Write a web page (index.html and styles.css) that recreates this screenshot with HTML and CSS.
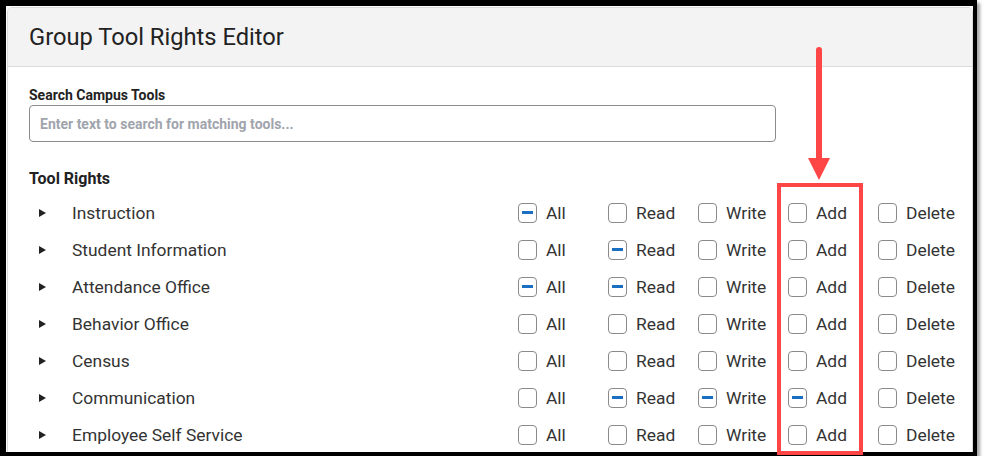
FILE: index.html
```html
<!DOCTYPE html>
<html lang="en">
<head>
    <meta charset="UTF-8">
    <meta name="viewport" content="width=device-width, initial-scale=1.0">
    <title>Group Tool Rights Editor</title>
    <link rel="stylesheet" href="styles.css">
</head>
<body>
    <div class="frame">
        <div class="panel">
            <div class="header">
                <h1>Group Tool Rights Editor</h1>
            </div>
            <div class="content">
                <label class="field-label" for="search">Search Campus Tools</label>
                <input id="search" class="search" type="text" placeholder="Enter text to search for matching tools...">

                <h2 class="section-title">Tool Rights</h2>
                <div class="rights">
                    <div class="row">
                        <span class="caret"></span><span class="name">Instruction</span>
                        <span class="opt"><span class="box partial"></span>All</span>
                        <span class="opt"><span class="box"></span>Read</span>
                        <span class="opt"><span class="box"></span>Write</span>
                        <span class="opt"><span class="box"></span>Add</span>
                        <span class="opt"><span class="box"></span>Delete</span>
                    </div>
                    <div class="row">
                        <span class="caret"></span><span class="name">Student Information</span>
                        <span class="opt"><span class="box"></span>All</span>
                        <span class="opt"><span class="box partial"></span>Read</span>
                        <span class="opt"><span class="box"></span>Write</span>
                        <span class="opt"><span class="box"></span>Add</span>
                        <span class="opt"><span class="box"></span>Delete</span>
                    </div>
                    <div class="row">
                        <span class="caret"></span><span class="name">Attendance Office</span>
                        <span class="opt"><span class="box partial"></span>All</span>
                        <span class="opt"><span class="box partial"></span>Read</span>
                        <span class="opt"><span class="box"></span>Write</span>
                        <span class="opt"><span class="box"></span>Add</span>
                        <span class="opt"><span class="box"></span>Delete</span>
                    </div>
                    <div class="row">
                        <span class="caret"></span><span class="name">Behavior Office</span>
                        <span class="opt"><span class="box"></span>All</span>
                        <span class="opt"><span class="box"></span>Read</span>
                        <span class="opt"><span class="box"></span>Write</span>
                        <span class="opt"><span class="box"></span>Add</span>
                        <span class="opt"><span class="box"></span>Delete</span>
                    </div>
                    <div class="row">
                        <span class="caret"></span><span class="name">Census</span>
                        <span class="opt"><span class="box"></span>All</span>
                        <span class="opt"><span class="box"></span>Read</span>
                        <span class="opt"><span class="box"></span>Write</span>
                        <span class="opt"><span class="box"></span>Add</span>
                        <span class="opt"><span class="box"></span>Delete</span>
                    </div>
                    <div class="row">
                        <span class="caret"></span><span class="name">Communication</span>
                        <span class="opt"><span class="box"></span>All</span>
                        <span class="opt"><span class="box partial"></span>Read</span>
                        <span class="opt"><span class="box partial"></span>Write</span>
                        <span class="opt"><span class="box partial"></span>Add</span>
                        <span class="opt"><span class="box"></span>Delete</span>
                    </div>
                    <div class="row">
                        <span class="caret"></span><span class="name">Employee Self Service</span>
                        <span class="opt"><span class="box"></span>All</span>
                        <span class="opt"><span class="box"></span>Read</span>
                        <span class="opt"><span class="box"></span>Write</span>
                        <span class="opt"><span class="box"></span>Add</span>
                        <span class="opt"><span class="box"></span>Delete</span>
                    </div>
                </div>
            </div>
        </div>
    </div>

    <!-- annotation overlay -->
    <div class="highlight"></div>
    <svg class="arrow" width="40" height="140" viewBox="0 0 40 140">
        <line x1="20" y1="4" x2="20" y2="116" stroke="#ff4646" stroke-width="6" stroke-linecap="round"/>
        <polygon points="9,112 31,112 20,134" fill="#ff4646"/>
    </svg>
</body>
</html>
```

FILE: styles.css
```css
body {
    margin: 0;
    padding: 0;
    background-color: #ffffff;
    font-family: Roboto, "Liberation Sans", Arial, sans-serif;
    color: #333;
}

.frame {
    width: 967px;
    height: 446px;
    border-style: solid;
    border-color: #000;
    border-width: 6px 4px 4px 6px;
    box-shadow: 3px 3px 3px rgba(0, 0, 0, 0.35);
    background-color: #ffffff;
    overflow: hidden;
}

.panel {
    margin: 1px 0 0 1px;
    height: 460px;
    border: 1px solid #dcdcdc;
    border-radius: 5px;
    overflow: hidden;
}

.header {
    height: 58px;
    display: flex;
    align-items: center;
    padding-left: 21px;
    background-color: #f3f3f3;
    border-bottom: 1px solid #dcdcdc;
}

.header h1 {
    margin: 0;
    font-size: 23.7px;
    font-weight: 400;
    color: #222;
}

.content {
    padding: 20px 21px 0 21px;
}

.field-label {
    display: block;
    font-size: 14px;
    font-weight: 700;
    line-height: 17px;
    color: #222;
    margin-bottom: 1px;
}

.search {
    display: block;
    box-sizing: border-box;
    width: 747px;
    height: 37px;
    padding: 0 10px;
    border: 1px solid #8c8c8c;
    border-radius: 4px;
    font-family: inherit;
    font-size: 14px;
    font-weight: 700;
    outline: none;
}

.search::placeholder {
    color: #a0a4ad;
}

.section-title {
    margin: 27px 0 0 0;
    font-size: 16px;
    font-weight: 700;
    line-height: 19px;
    color: #222;
}

.rights {
    margin-top: 6px;
}

.row {
    display: grid;
    grid-template-columns: 43px 446px repeat(5, 90px);
    align-items: center;
    height: 37px;
    font-size: 17.4px;
}

.caret {
    width: 0;
    height: 0;
    margin-left: 10px;
    border-top: 4.5px solid transparent;
    border-bottom: 4.5px solid transparent;
    border-left: 7px solid #222;
}

.name {
    color: #333;
}

.opt {
    display: flex;
    align-items: center;
    gap: 9px;
    color: #333;
}

.box {
    position: relative;
    box-sizing: border-box;
    width: 19px;
    height: 20px;
    border: 1px solid #8a8a8a;
    border-radius: 4px;
    background-color: #fff;
}

.partial::after {
    content: "";
    position: absolute;
    left: 3px;
    top: 7px;
    width: 11px;
    height: 3px;
    background-color: #1b6fc2;
}

.highlight {
    position: absolute;
    left: 777px;
    top: 183px;
    width: 78px;
    height: 264px;
    border: 4px solid #ff4646;
}

.arrow {
    position: absolute;
    left: 799px;
    top: 46px;
}
```
